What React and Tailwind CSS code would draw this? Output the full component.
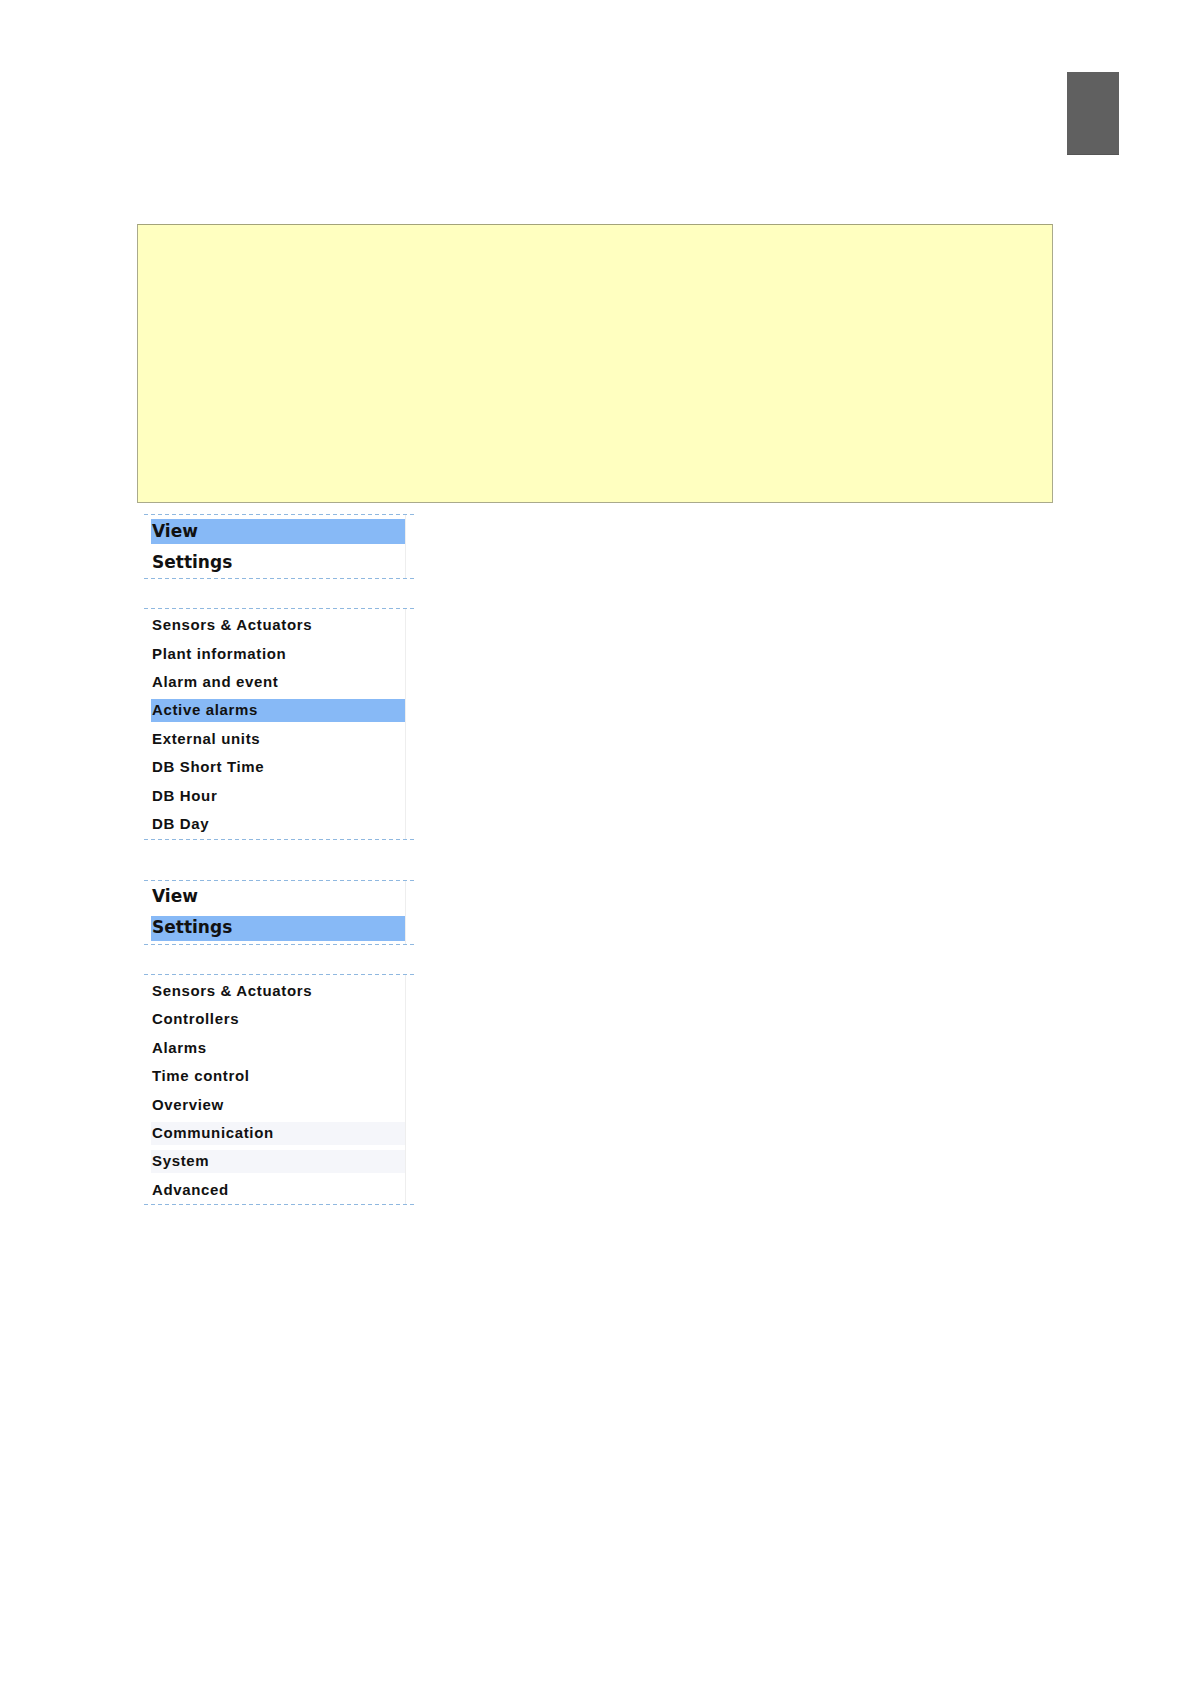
const dash =
  'h-px w-[270px] bg-[repeating-linear-gradient(90deg,#8fb8e0_0px,#8fb8e0_4px,transparent_4px,transparent_7px)]';

const TopMenu = ({ active }) => (
  <div className="ml-[144px] w-[270px]">
    <div className={dash} />
    <div className="ml-[7px] w-[255px] border-r border-[#eeeeee] pt-[4px] pb-[3px] flex flex-col gap-[6px]">
      {['View', 'Settings'].map(item => (
        <div
          key={item}
          className={
            'h-[25px] pl-[1px] flex items-center text-[17px] font-bold text-[#111] font-["DejaVu_Sans",sans-serif] ' +
            (item === active ? 'bg-[#87b9f6]' : '')
          }
        >
          {item}
        </div>
      ))}
    </div>
    <div className={dash} />
  </div>
);

const SubMenu = ({ items, active, faint = [] }) => (
  <div className="ml-[144px] w-[270px]">
    <div className={dash} />
    <div className="ml-[7px] w-[255px] border-r border-[#eeeeee] pt-[5px] pb-[3px] flex flex-col gap-[5.4px]">
      {items.map(item => {
        let bg = '';
        if (item === active) bg = 'bg-[#87b9f6]';
        else if (faint.includes(item)) bg = 'bg-[#f5f6fa]';
        return (
          <div
            key={item}
            className={
              'h-[23px] pl-[1px] flex items-center text-[15px] font-bold tracking-[0.65px] text-[#111] font-["Liberation_Sans",Arial,sans-serif] ' +
              bg
            }
          >
            {item}
          </div>
        );
      })}
    </div>
    <div className={dash} />
  </div>
);

export default function App() {
  return (
    <div className="w-[1191px] h-[1684px] bg-white">
      <div className="pt-[72px] pr-[72px] flex justify-end">
        <div className="w-[52px] h-[83px] bg-[#606060] border-b border-[#555555]" />
      </div>

      <div className="mt-[69px] ml-[137px] w-[916px] h-[279px] bg-[#ffffc0] border border-[#aaaa8c] border-t-[#a3a37a]" />

      <div className="mt-[11px]">
        <TopMenu active="View" />
      </div>

      <div className="mt-[29px]">
        <SubMenu
          active="Active alarms"
          items={[
            'Sensors & Actuators',
            'Plant information',
            'Alarm and event',
            'Active alarms',
            'External units',
            'DB Short Time',
            'DB Hour',
            'DB Day',
          ]}
        />
      </div>

      <div className="mt-[40px]">
        <TopMenu active="Settings" />
      </div>

      <div className="mt-[29px]">
        <SubMenu
          faint={['Communication', 'System']}
          items={[
            'Sensors & Actuators',
            'Controllers',
            'Alarms',
            'Time control',
            'Overview',
            'Communication',
            'System',
            'Advanced',
          ]}
        />
      </div>
    </div>
  );
}
